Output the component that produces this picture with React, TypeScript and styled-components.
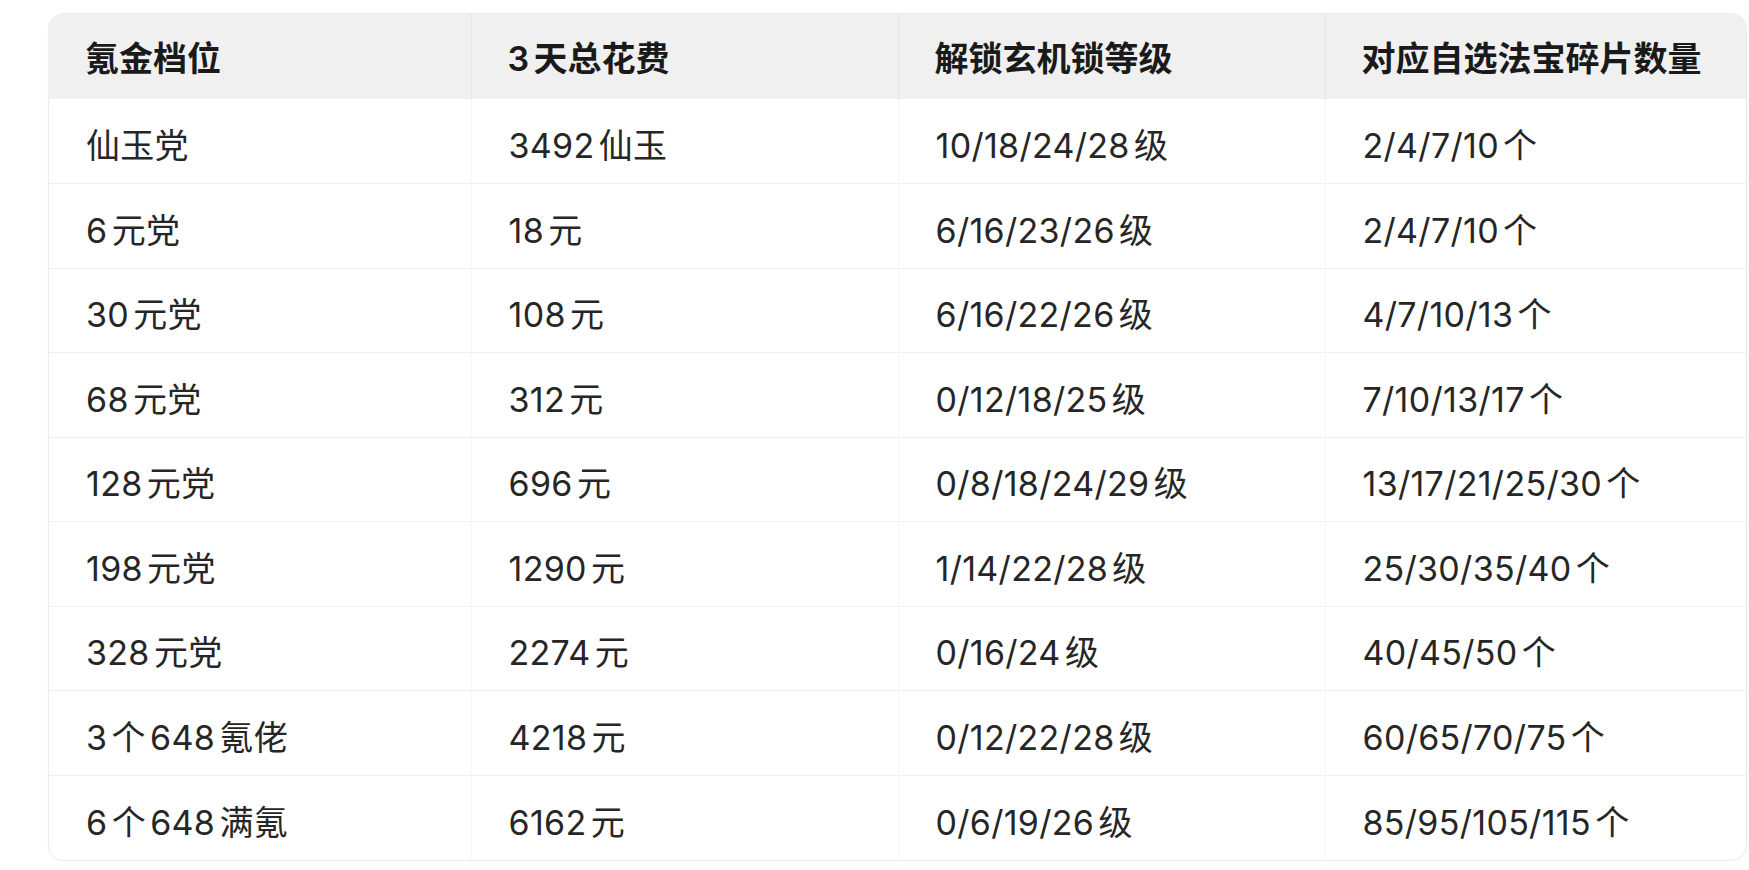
import React, { FC } from "react";
import styled, { createGlobalStyle } from "styled-components";

const GlobalStyle = createGlobalStyle`
  html, body {
    margin: 0;
    padding: 0;
    background: #ffffff;
  }
  body {
    font-family: Inter, "Noto Sans CJK SC", sans-serif;
    -webkit-font-smoothing: antialiased;
  }
`;

const columns = [
  { title: "氪金档位", width: 422 },
  { title: "3天总花费", width: 427 },
  { title: "解锁玄机锁等级", width: 427 },
  { title: "对应自选法宝碎片数量", width: 421 },
];

const rows: string[][] = [
  ["仙玉党", "3492仙玉", "10/18/24/28级", "2/4/7/10个"],
  ["6元党", "18元", "6/16/23/26级", "2/4/7/10个"],
  ["30元党", "108元", "6/16/22/26级", "4/7/10/13个"],
  ["68元党", "312元", "0/12/18/25级", "7/10/13/17个"],
  ["128元党", "696元", "0/8/18/24/29级", "13/17/21/25/30个"],
  ["198元党", "1290元", "1/14/22/28级", "25/30/35/40个"],
  ["328元党", "2274元", "0/16/24级", "40/45/50个"],
  ["3个648氪佬", "4218元", "0/12/22/28级", "60/65/70/75个"],
  ["6个648满氪", "6162元", "0/6/19/26级", "85/95/105/115个"],
];

const App: FC = () => {
  return (
    <>
      <GlobalStyle />
      <Page>
        <Card>
          <Table>
            <colgroup>
              {columns.map((c) => (
                <Col key={c.title} $width={c.width} />
              ))}
            </colgroup>
            <thead>
              <tr>
                {columns.map((c, i) => (
                  <HeadCell key={c.title} $last={i === columns.length - 1}>
                    {c.title}
                  </HeadCell>
                ))}
              </tr>
            </thead>
            <tbody>
              {rows.map((r, ri) => (
                <Row key={r[0]} $last={ri === rows.length - 1}>
                  {r.map((v, i) => (
                    <Cell key={i} $last={i === r.length - 1}>
                      {v}
                    </Cell>
                  ))}
                </Row>
              ))}
            </tbody>
          </Table>
        </Card>
      </Page>
    </>
  );
};

const Page = styled.div`
  padding: 13px 4px 0 48px;
`;

const Card = styled.div`
  width: 1697px;
  border: 1px solid #ececec;
  border-radius: 16px;
  overflow: hidden;
  background: #ffffff;
  box-shadow: 0 1px 3px rgba(0, 0, 0, 0.04);
`;

const Table = styled.table`
  width: 100%;
  border-collapse: collapse;
  table-layout: fixed;
`;

const Col = styled.col<{ $width: number }>`
  width: ${(p) => p.$width}px;
`;

const HeadCell = styled.th<{ $last?: boolean }>`
  box-sizing: border-box;
  height: 85px;
  padding: 0 36px;
  background: #f0f0f0;
  color: #1a1a1a;
  font-size: 34px;
  font-weight: 600;
  text-align: left;
  white-space: nowrap;
  text-autospace: normal;
  border-right: ${(p) => (p.$last ? "none" : "1px solid #e4e4e4")};
`;

const Row = styled.tr<{ $last?: boolean }>`
  border-bottom: ${(p) => (p.$last ? "none" : "1px solid #f0f0f0")};
`;

const Cell = styled.td<{ $last?: boolean }>`
  box-sizing: border-box;
  height: 84.5px;
  padding: 5px 37px 0;
  color: #262626;
  font-size: 34px;
  font-weight: 400;
  letter-spacing: 0.3px;
  white-space: nowrap;
  text-autospace: normal;
  border-right: ${(p) => (p.$last ? "none" : "1px solid #f6f6f6")};
`;

export default App;
